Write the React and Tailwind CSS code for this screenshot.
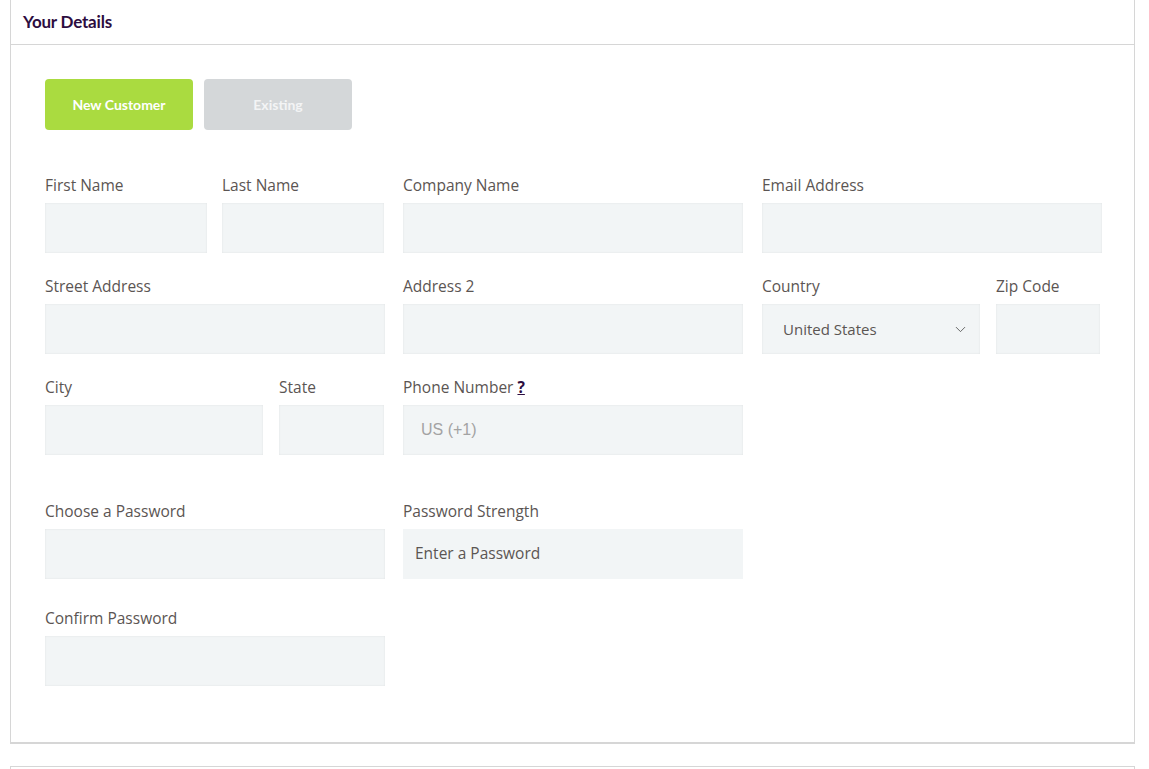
import { ChevronDown } from "lucide-react";

const labelCls = "block text-[15.5px] leading-5 text-[#5b5553] mb-2";
const boxCls =
  "block w-full h-[50px] bg-[#f2f5f6] shadow-[inset_0_0_2px_rgba(0,0,0,0.09)] outline-none text-[15px] text-[#5b5553]";
const inputCls = boxCls + " px-[18px]";

const Field = ({ label, width, children, extra }) => (
  <div className={width}>
    <label className={labelCls}>
      {label}
      {extra}
    </label>
    {children || <input type="text" className={inputCls} />}
  </div>
);

export default function App() {
  return (
    <div
      className="bg-white min-h-screen px-[10px]"
      style={{ fontFamily: '"Open Sans", "Liberation Sans", sans-serif' }}
    >
      {/* Your Details panel */}
      <div className="w-[1125px] border-x border-b-2 border-[#d6d6d6]">
        <div className="h-[45px] border-b border-[#d6d6d6] px-3 flex items-center">
          <h2
            className="text-[17px] font-bold text-[#2d0d3f] tracking-[-0.2px]"
            style={{ fontFamily: 'Lato, "Open Sans", sans-serif' }}
          >
            Your Details
          </h2>
        </div>

        <div className="pl-[34px] pt-[34px] pb-[56px]">
          {/* Customer type */}
          <div
            className="flex gap-[11px]"
            style={{ fontFamily: 'Lato, "Open Sans", sans-serif' }}
          >
            <button className="w-[148px] h-[51px] rounded bg-[#aadb40] text-white text-[14px] font-bold">
              New Customer
            </button>
            <button className="w-[148px] h-[51px] rounded bg-[#d4d7d9] text-[#f3f4f5] text-[14px] font-bold">
              Existing
            </button>
          </div>

          {/* Row 1 */}
          <div className="flex mt-[45px]">
            <div className="w-[340px] flex gap-[15px]">
              <Field label="First Name" width="w-[162px]" />
              <Field label="Last Name" width="w-[162px]" />
            </div>
            <Field label="Company Name" width="w-[340px] ml-[18px]" />
            <Field label="Email Address" width="w-[340px] ml-[19px]" />
          </div>

          {/* Row 2 */}
          <div className="flex mt-[23px]">
            <Field label="Street Address" width="w-[340px]" />
            <Field label="Address 2" width="w-[340px] ml-[18px]" />
            <div className="w-[340px] ml-[19px] flex gap-[16px]">
              <Field label="Country" width="w-[218px]">
                <div className={boxCls + " flex items-center justify-between pl-[21px] pr-[11px]"}>
                  <span>United States</span>
                  <ChevronDown size={17} strokeWidth={1.25} className="text-[#555]" />
                </div>
              </Field>
              <Field label="Zip Code" width="w-[104px]" />
            </div>
          </div>

          {/* Row 3 */}
          <div className="flex mt-[23px]">
            <div className="w-[340px] flex gap-[16px]">
              <Field label="City" width="w-[218px]" />
              <Field label="State" width="w-[105px]" />
            </div>
            <Field
              label="Phone Number "
              width="w-[340px] ml-[18px]"
              extra={
                <a className="font-bold underline text-[#2d0d3f] cursor-pointer">?</a>
              }
            >
              <input
                type="text"
                placeholder="US (+1)"
                className={inputCls + " placeholder:text-[#a3a3a3]"}
                style={{ fontFamily: '"Liberation Sans", Arial, sans-serif', fontSize: "16px" }}
              />
            </Field>
          </div>

          {/* Row 4 */}
          <div className="flex mt-[46px]">
            <Field label="Choose a Password" width="w-[340px]">
              <input type="password" className={inputCls} />
            </Field>
            <Field label="Password Strength" width="w-[340px] ml-[18px]">
              <div className="w-full h-[50px] bg-[#f2f5f6] flex items-center pl-3 text-[15.5px] text-[#5b5553]">
                Enter a Password
              </div>
            </Field>
          </div>

          {/* Row 5 */}
          <div className="flex mt-[29px]">
            <Field label="Confirm Password" width="w-[340px]">
              <input type="password" className={inputCls} />
            </Field>
          </div>
        </div>
      </div>

      {/* Next panel */}
      <div className="w-[1125px] mt-[22px] h-[200px] border-x border-t border-[#d6d6d6]" />
    </div>
  );
}
